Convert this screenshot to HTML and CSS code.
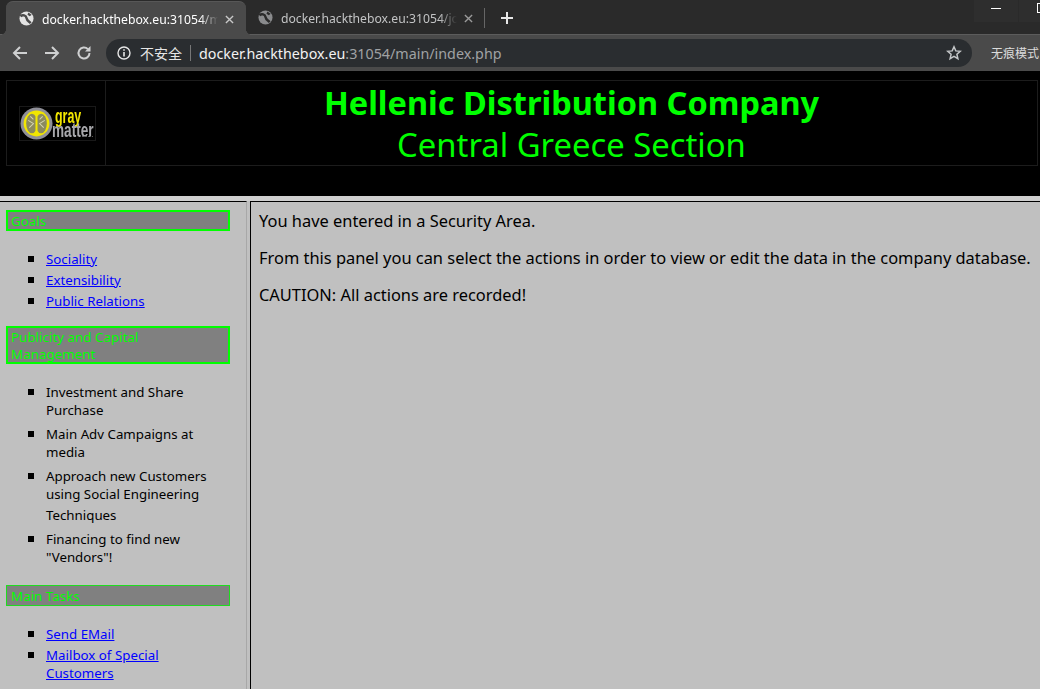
FILE: index.html
```html
<!DOCTYPE html>
<html lang="zh">
<head>
<meta charset="utf-8">
<title>Hellenic Distribution Company</title>
<link rel="stylesheet" href="styles.css">
</head>
<body>
<div class="browser">
  <div class="tabstrip">
    <div class="tab tab-active">
      <svg class="globe" viewBox="0 0 16 16"><circle cx="8" cy="8" r="7.500" fill="#e3e3e3"/><path d="M1.500 5.500C4 3.800 7.500 4.500 8 7.500S10.500 11 12.500 13" fill="none" stroke="#4a4a4a" stroke-width="2.600"/><path d="M10 1.500l3.500 2.500-2 1.500-2.500-1.500z" fill="#4a4a4a"/></svg>
      <span class="tab-title">docker.hackthebox.eu:31054/main/index.php</span>
      <svg class="tab-x" viewBox="0 0 10 10"><path d="M1 1l8 8M9 1l-8 8" stroke="#c8c8c8" stroke-width="1.500"/></svg>
    </div>
    <div class="tab tab-idle">
      <svg class="globe" viewBox="0 0 16 16"><circle cx="8" cy="8" r="7.500" fill="#8a8b8d"/><path d="M1.500 5.500C4 3.800 7.500 4.500 8 7.500S10.500 11 12.500 13" fill="none" stroke="#2b2b2b" stroke-width="2.600"/><path d="M10 1.500l3.500 2.500-2 1.500-2.500-1.500z" fill="#2b2b2b"/></svg>
      <span class="tab-title">docker.hackthebox.eu:31054/jobs/index.php</span>
      <svg class="tab-x" viewBox="0 0 10 10"><path d="M1 1l8 8M9 1l-8 8" stroke="#9a9a9a" stroke-width="1.500"/></svg>
    </div>
    <span class="tab-sep"></span>
    <svg class="newtab" viewBox="0 0 12 12"><path d="M6 0v12M0 6h12" stroke="#e8e8e8" stroke-width="2"/></svg>
    <div class="winbtns">
      <span class="winbtn"><svg viewBox="0 0 10 10"><path d="M0 5.500h10" stroke="#fff"/></svg></span>
      <span class="winbtn winbtn-max"><svg viewBox="0 0 10 10"><rect x=".5" y=".5" width="9" height="9" fill="none" stroke="#fff"/></svg></span>
    </div>
  </div>
  <div class="toolbar">
    <svg class="navicon" viewBox="0 0 16 16"><path d="M15 8H2M8 2L2 8l6 6" fill="none" stroke="#cfd0d1" stroke-width="2"/></svg>
    <svg class="navicon" viewBox="0 0 16 16"><path d="M1 8h13M8 2l6 6-6 6" fill="none" stroke="#cfd0d1" stroke-width="2"/></svg>
    <svg class="navicon" viewBox="0 0 16 16"><path d="M13.500 8a5.500 5.500 0 1 1-1.600-3.900" fill="none" stroke="#cfd0d1" stroke-width="2"/><path d="M14.500 1v5.500H9z" fill="#cfd0d1"/></svg>
    <div class="omnibox">
      <svg class="info" viewBox="0 0 14 14"><circle cx="7" cy="7" r="6" fill="none" stroke="#e6e6e6" stroke-width="1.400"/><path d="M7 6v4.500M7 3.200v1.600" stroke="#e6e6e6" stroke-width="1.600"/></svg>
      <span class="insecure">不安全</span>
      <span class="omni-sep"></span>
      <span class="url"><span class="url-host">docker.hackthebox.eu</span>:31054/main/index.php</span>
      <svg class="star" viewBox="0 0 16 16"><path d="M8 1.800l1.800 4.100 4.500.4-3.400 3 1 4.400L8 11.400l-3.900 2.300 1-4.400-3.400-3 4.500-.4z" fill="none" stroke="#c4c6c8" stroke-width="1.500"/></svg>
    </div>
    <span class="incognito">无痕模式</span>
  </div>
</div>
<header class="banner">
  <table class="banner-table">
    <tr>
      <td class="logo-cell">
        <div class="logo">
          <svg class="logo-mark" viewBox="0 0 32 32"><circle cx="16" cy="16" r="15.500" fill="#8f8f98"/><circle cx="16" cy="16" r="12.500" fill="#f2e600"/><ellipse cx="11.500" cy="16" rx="5.500" ry="9.500" fill="#8b8a5e"/><ellipse cx="20.500" cy="16" rx="5.500" ry="9.500" fill="#8b8a5e"/><path d="M16 5v22" stroke="#f2e600" stroke-width="2"/><path d="M8 13l5 3-4 4M24 13l-5 3 4 4M10 9l3 3M22 9l-3 3" stroke="#d4d4b0" fill="none"/></svg>
          <div class="logo-words"><span class="logo-gray">gray</span><span class="logo-matter">matter</span></div>
        </div>
      </td>
      <td class="title-cell">
        <h1 class="title">Hellenic Distribution Company</h1>
        <div class="subtitle">Central Greece Section</div>
      </td>
    </tr>
  </table>
</header>
<div class="page">
  <aside class="side">
    <h2 class="side-head"><span class="head-text">Goals</span></h2>
    <ul class="side-list">
      <li><a href="#">Sociality</a></li>
      <li><a href="#">Extensibility</a></li>
      <li><a href="#">Public Relations</a></li>
    </ul>
    <h2 class="side-head"><span class="head-text">Publicity and Capital Management</span></h2>
    <ul class="side-list side-plain">
      <li>Investment and Share Purchase</li>
      <li>Main Adv Campaigns at media</li>
      <li>Approach new Customers using Social Engineering <span class="tall-line">Techniques</span></li>
      <li>Financing to find new "Vendors"!</li>
    </ul>
    <h2 class="side-head side-head-thin"><span class="head-text">Main Tasks</span></h2>
    <ul class="side-list">
      <li><a href="#">Send EMail</a></li>
      <li><a href="#">Mailbox of Special Customers</a></li>
    </ul>
  </aside>
  <main class="content">
    <p>You have entered in a Security Area.</p>
    <p>From this panel you can select the actions in order to view or edit the data in the company database.</p>
    <p>CAUTION: All actions are recorded!</p>
  </main>
</div>
</body>
</html>
```
FILE: styles.css
```css
html, body { margin: 0; padding: 0; height: 100%; overflow: hidden; background: #000; }
body { font-family: "Noto Sans", "Noto Sans CJK SC", sans-serif; }
.browser { height: 71px; background: #2b2b2b; color: #e8e8e8; display: flex; flex-direction: column; }
.tabstrip { height: 34px; flex: none; display: flex; align-items: flex-end; padding-left: 6px; background: #2a2a2a; }
.tab { height: 33px; width: 240px; flex: none; box-sizing: border-box; display: flex; align-items: center; padding: 1px 12px 0 13px; border-radius: 7px 7px 0 0; font-size: 12.200px; position: relative; }
.tab-active { background: #4a4a4a; color: #fff; height: 34px; margin-bottom: -1px; z-index: 1; border-top: 1px solid #575757; }
.tab-active::before, .tab-active::after { content: ""; position: absolute; bottom: 0; width: 7px; height: 7px; }
.tab-active::before { left: -7px; background: radial-gradient(circle at 0 0, transparent 7px, #4a4a4a 7.500px); }
.tab-active::after { right: -7px; background: radial-gradient(circle at 100% 0, transparent 7px, #4a4a4a 7.500px); }
.tab-idle { color: #c3c4c5; padding-left: 12px; padding-right: 13px; }
.globe { width: 15px; height: 15px; flex: none; margin-right: 8px; margin-bottom: 1px; }
.tab-title { flex: 1; min-width: 0; white-space: nowrap; overflow: hidden; -webkit-mask-image: linear-gradient(90deg, #000 90%, transparent 100%); mask-image: linear-gradient(90deg, #000 90%, transparent 100%); }
.tab-x { width: 9px; height: 9px; flex: none; margin-left: 7px; }
.tab-sep { width: 1px; height: 20px; background: #666; margin: 0 0 6px -2px; }
.newtab { width: 12px; height: 12px; margin: 0 0 10px 16px; }
.winbtns { margin-left: auto; align-self: flex-start; display: flex; height: 22px; }
.winbtn { width: 44px; display: flex; align-items: center; justify-content: center; background: #2e2e2e; margin-left: 1px; }
.winbtn svg { width: 10px; height: 10px; margin-bottom: 7px; flex: none; }
.winbtn-max { width: 21px; box-sizing: border-box; justify-content: flex-start; padding-left: 18px; overflow: hidden; }
.toolbar { height: 37px; flex: none; display: flex; align-items: center; background: #4a4a4a; box-sizing: border-box; padding: 0 0 0 12px; border-top: 1px solid #5c5c5c; }
.navicon { width: 16px; height: 16px; flex: none; margin-right: 16px; }
.omnibox { width: 866px; height: 28px; flex: none; margin-left: -2px; background: #2a2d30; border-radius: 14px; display: flex; align-items: center; padding: 0 10px 0 11px; box-sizing: border-box; }
.info { width: 14px; height: 14px; flex: none; margin-right: 9px; }
.insecure { font-size: 14px; color: #e6e6e6; }
.omni-sep { width: 1px; height: 16px; background: #777; margin: 0 8px; }
.url { font-size: 14.300px; color: #a0a2a4; white-space: nowrap; }
.url-host { color: #f2f2f2; }
.star { width: 16px; height: 16px; margin-left: auto; }
.incognito { font-size: 12px; color: #dcdcdc; margin-left: 19px; white-space: nowrap; }
.banner { height: 125px; background: #000; box-sizing: border-box; padding: 9px 0 0 6px; }
.banner-table { width: 1032px; height: 86px; border-collapse: collapse; }
.banner-table td { border: 1px solid #1c1c1c; padding: 0; }
.logo-cell { width: 98px; }
.logo { width: 75px; height: 33px; margin: 0 auto; display: flex; align-items: center; outline: 1px solid #191919; position: relative; left: 1px; }
.logo::after { content: ""; position: absolute; left: 58px; right: 2px; bottom: 3px; border-bottom: 1px dotted #5a5a5a; }
.logo-mark { width: 33px; height: 33px; flex: none; }
.logo-words { display: flex; flex-direction: column; width: 42px; margin-left: 1px; font-family: "Liberation Sans", sans-serif; font-weight: 700; }
.logo-gray { font-size: 20px; line-height: 14px; margin-left: 1px; color: #f2e600; transform: scaleX(.62); transform-origin: left; white-space: nowrap; }
.logo-matter { font-size: 20px; line-height: 14px; margin-left: -2px; color: #a8a8ac; transform: scaleX(.68); transform-origin: left; white-space: nowrap; }
.banner-table .title-cell { text-align: center; color: #00ff00; padding-top: 1px; }
.title { margin: 0; font-size: 32.500px; line-height: 42px; font-weight: 700; }
.subtitle { font-size: 32.800px; line-height: 42px; margin-bottom: -1px; }
.page { height: 493px; background: #c0c0c0; display: flex; border-top: 5px solid #cfcfcf; box-sizing: border-box; }
.side { width: 247px; flex: none; box-sizing: border-box; padding: 8px 16px 0 6px; border-top: 1px solid #000; border-right: 1px solid #a8a8a8; font-size: 13.300px; color: #000; }
.side-head { margin: 0; border: 2px solid #00ff00; background: #808080; color: #00ff00; font-size: 13.400px; font-weight: 400; line-height: 17px; padding: 1px 8px 0 3px; }
.head-text { display: block; margin-bottom: -1px; }
.side-head-thin { border: 1px solid #1fdc1f; line-height: 19px; padding-left: 4px; }
.side-list { margin: 19px 0 16px; padding: 0 8px 0 40px; list-style: none; line-height: 18px; }
.side-list li { margin-bottom: 3px; position: relative; }
.side-list li:last-child { margin-bottom: 0; }
.side-list li::before { content: ""; position: absolute; left: -18px; top: 6px; width: 6px; height: 6px; background: #000; }
.side-plain { margin-bottom: 19px; }
.side-plain li { margin-bottom: 6px; }
.tall-line { display: block; margin-top: 3px; }
.side a { color: #0000ff; }
.content { flex: 1; box-sizing: border-box; border-top: 1px solid #000; border-left: 1px solid #000; margin-left: 3px; padding: 8px 0 0 8px; font-size: 16.420px; color: #000; white-space: nowrap; }
.content p { margin: 0 0 15px; line-height: 22px; }
```
